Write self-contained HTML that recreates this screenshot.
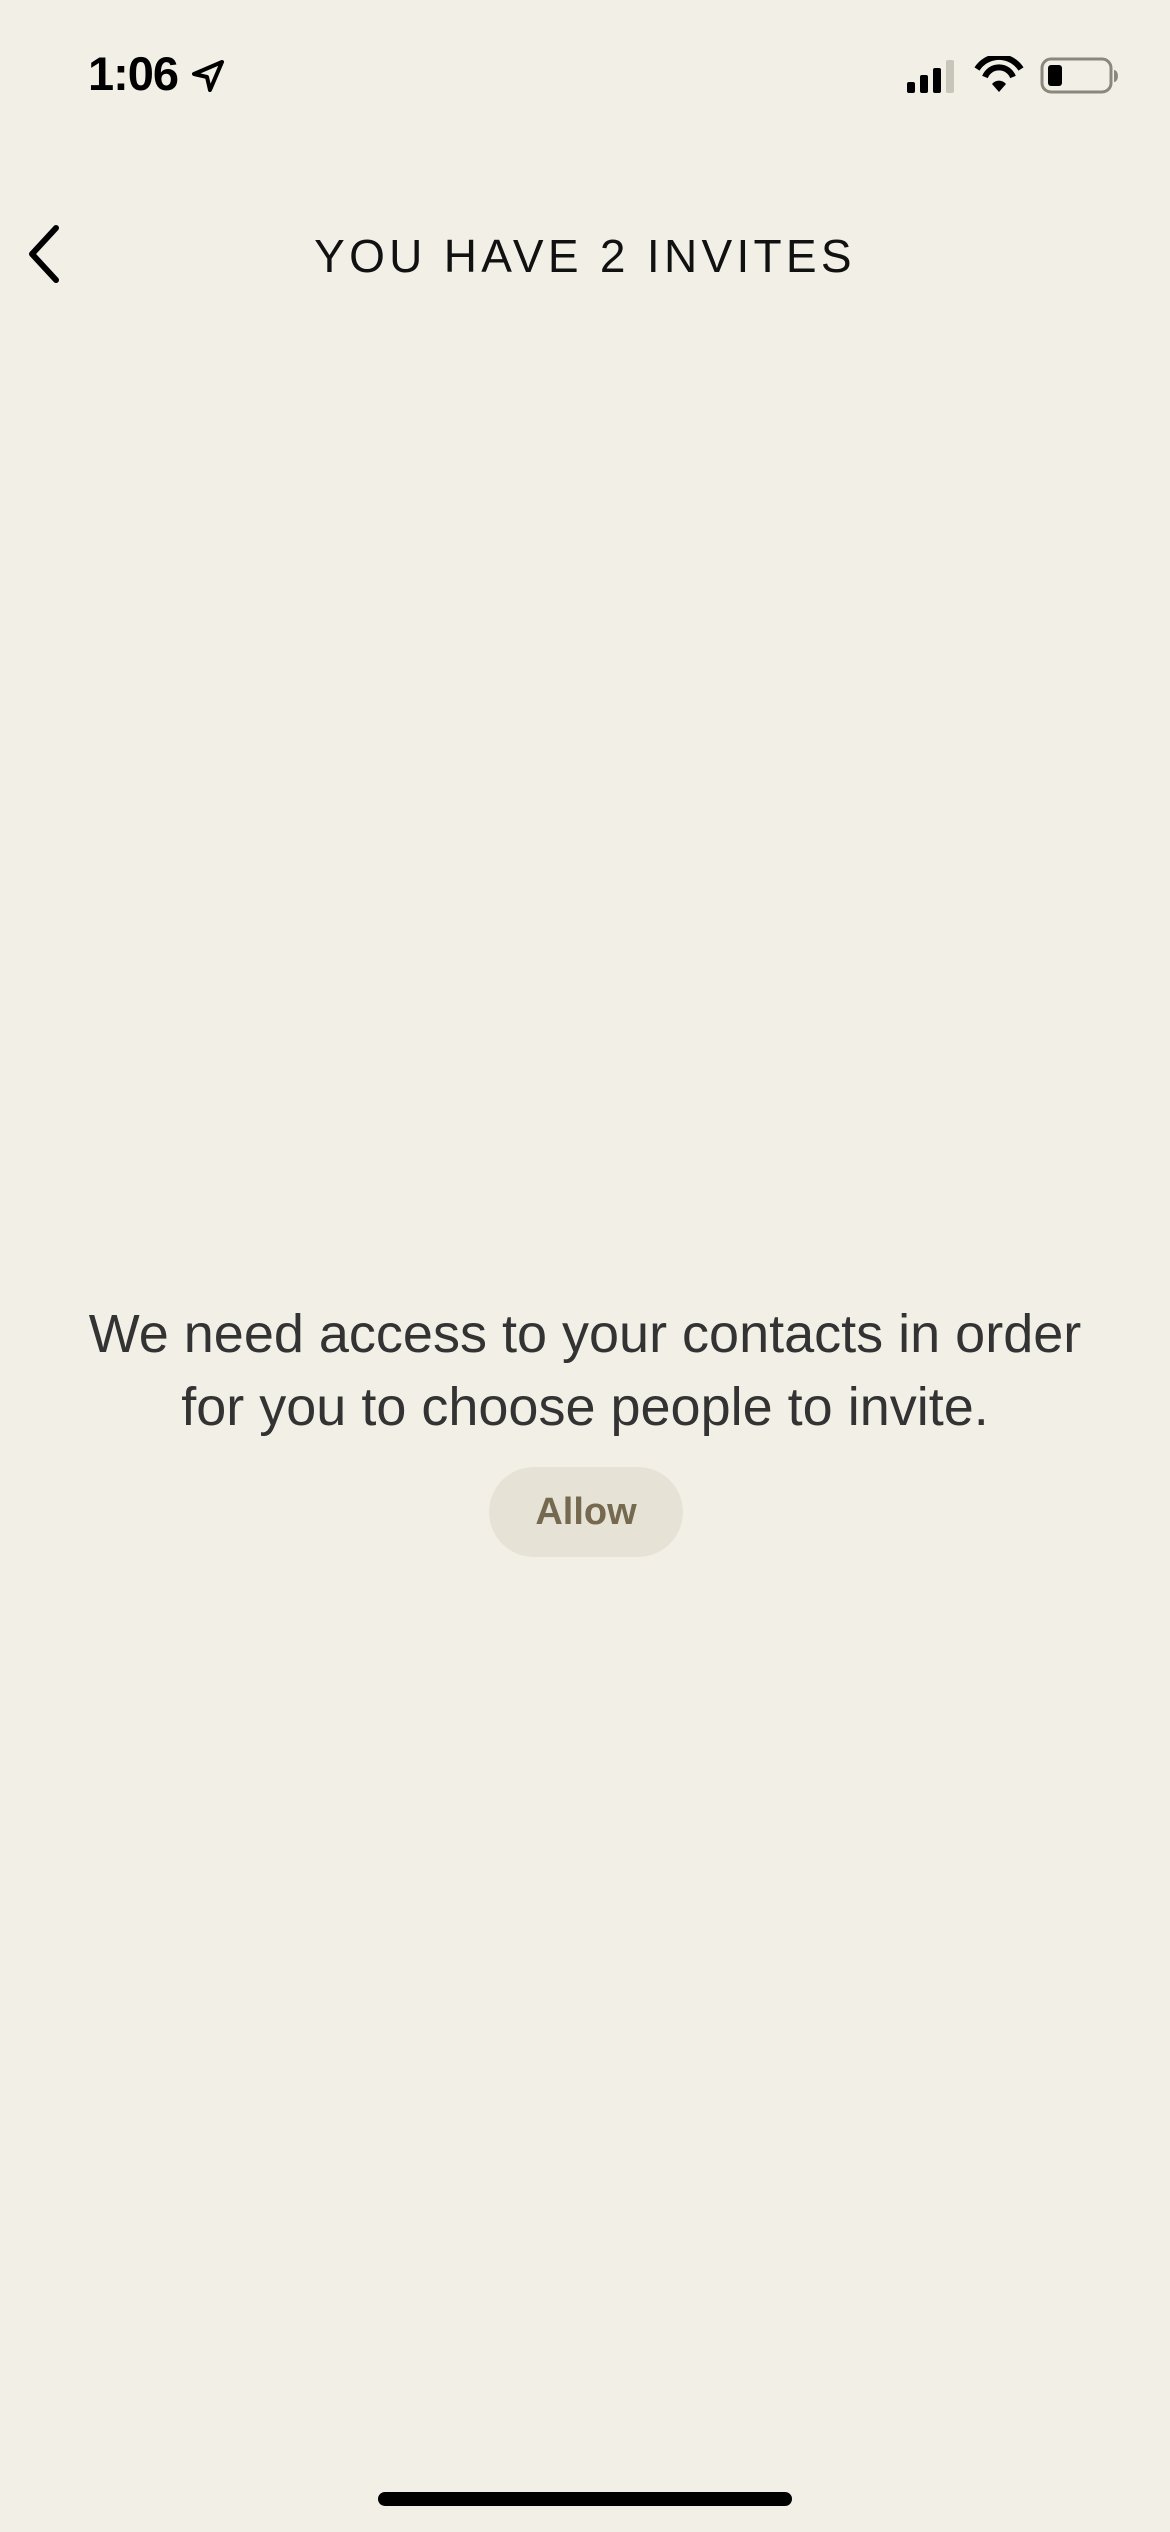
<!DOCTYPE html>
<html><head><meta charset="utf-8"><style>
html,body{margin:0;padding:0}
body{width:1170px;height:2532px;background:#f2f0e6;position:relative;overflow:hidden;font-family:"Liberation Sans",sans-serif}
.abs{position:absolute}
.time{left:88px;top:46px;font-size:47px;font-weight:bold;color:#000;letter-spacing:-1px}
.title{left:0;width:1170px;top:229px;text-align:center;font-size:46px;letter-spacing:4.3px;color:#111}
.msg{left:0;width:1170px;top:1298px;text-align:center;font-size:54px;line-height:73px;color:#333}
.btn{left:489px;top:1467px;width:194px;height:90px;border-radius:45px;background:#e6e3d6;color:#75694f;font-size:38px;font-weight:bold;text-align:center;line-height:90px}
.home{left:378px;top:2492px;width:414px;height:14px;border-radius:7px;background:#000}
</style></head><body>
<div class="abs time">1:06</div>
<svg class="abs" style="left:190px;top:58px" width="36" height="36" viewBox="0 0 36 36"><path d="M32 4 L4 16 L17 19 L20 32 Z" fill="none" stroke="#000" stroke-width="4" stroke-linejoin="round"/></svg>
<svg class="abs" style="left:905px;top:56px" width="220" height="40" viewBox="0 0 220 40">
<rect x="2" y="26" width="8" height="11" rx="2" fill="#000"/>
<rect x="15" y="19" width="8" height="18" rx="2" fill="#000"/>
<rect x="28" y="12" width="8" height="25" rx="2" fill="#000"/>
<rect x="41" y="4" width="8" height="33" rx="2" fill="#c8c5bb"/>
<path d="M72 13 A26 26 0 0 1 116 13" fill="none" stroke="#000" stroke-width="6"/>
<path d="M80 21 A15 15 0 0 1 108 21" fill="none" stroke="#000" stroke-width="6"/>
<path d="M87 28 L94 36 L101 28 A9 9 0 0 0 87 28 Z" fill="#000"/>
<rect x="137" y="3" width="69" height="33" rx="9" fill="none" stroke="#8a877f" stroke-width="3"/>
<rect x="143" y="9" width="14" height="21" rx="3" fill="#000"/>
<path d="M209 14 a4 6 0 0 1 0 12 z" fill="#8a877f"/>
</svg>
<svg class="abs" style="left:22px;top:222px" width="44" height="64" viewBox="0 0 44 64"><path d="M34 6 L10 32 L34 58" fill="none" stroke="#000" stroke-width="6" stroke-linecap="round" stroke-linejoin="round"/></svg>
<div class="abs title">YOU HAVE 2 INVITES</div>
<div class="abs msg">We need access to your contacts in order<br>for you to choose people to invite.</div>
<div class="abs btn">Allow</div>
<div class="abs home"></div>
</body></html>
